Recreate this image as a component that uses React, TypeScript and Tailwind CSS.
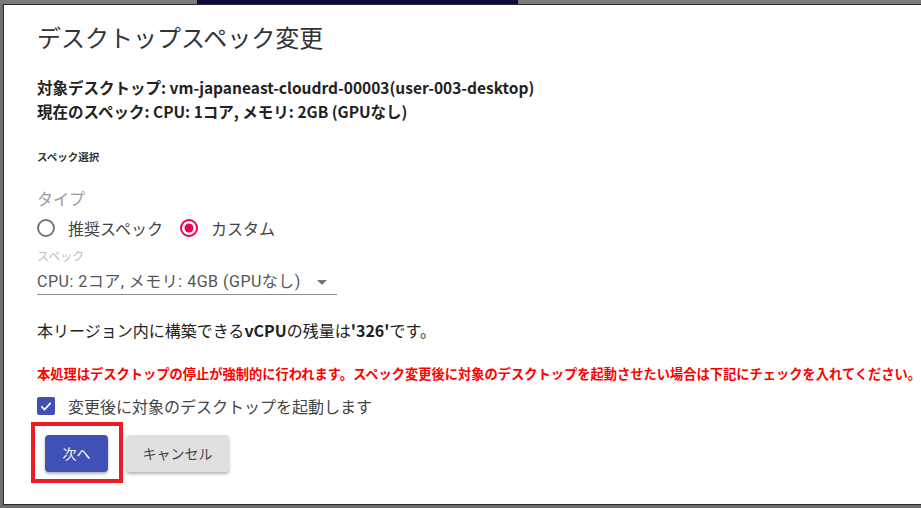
import React from "react";

const jp = { fontFamily: '"Noto Sans CJK JP", "Noto Sans", sans-serif' };
const rb = { fontFamily: 'Roboto, "Noto Sans CJK JP", sans-serif' };

export default function App() {
  return (
    <div className="w-[921px] h-[508px] bg-[#767676] overflow-hidden flex flex-col" style={jp}>
      <div className="h-[4px] flex shrink-0">
        <div className="w-[197px] bg-[#7a7a7a]" />
        <div className="w-[321px] bg-[#0b0b3e]" />
        <div className="flex-1 bg-[#7a7a7a]" />
      </div>
      <div className="flex h-[501px] shrink-0">
        <div className="w-[3px] bg-[#6f6f6f] shrink-0" />
        <div className="flex-1 bg-white border-t border-l border-b border-[#2a2a2a] pl-[33px] pt-[16px] flex flex-col">
          <div className="text-[24px] leading-[32px] text-[#333] whitespace-nowrap">デスクトップスペック変更</div>
          <div className="mt-[22px] text-[15.5px] leading-[24px] font-bold text-[#222] whitespace-nowrap">
            対象デスクトップ: vm-japaneast-cloudrd-00003(user-003-desktop)
          </div>
          <div className="text-[15.5px] leading-[24px] font-bold text-[#222] whitespace-nowrap">
            現在のスペック: CPU: 1コア, メモリ: 2GB (GPUなし)
          </div>
          <div className="mt-[27px] text-[10.5px] leading-[14px] font-bold text-[#333]">スペック選択</div>
          <div className="mt-[22px] text-[16px] leading-[24px] text-[#9a9a9a]">タイプ</div>
          <div className="mt-[6px] h-[24px] flex items-center text-[16px] text-[#444]">
            <svg width="18" height="18" viewBox="0 0 18 18" className="shrink-0">
              <circle cx="9" cy="9" r="8" fill="none" stroke="#757575" strokeWidth="2" />
            </svg>
            <span className="ml-[13px]">推奨スペック</span>
            <svg width="18" height="18" viewBox="0 0 18 18" className="ml-[17px] shrink-0">
              <circle cx="9" cy="9" r="8" fill="none" stroke="#f50057" strokeWidth="2" />
              <circle cx="9" cy="9" r="4.5" fill="#f50057" />
            </svg>
            <span className="ml-[13px]">カスタム</span>
          </div>
          <div className="mt-[8px] text-[12px] leading-[16px] text-[#bdbdbd]">スペック</div>
          <div className="mt-[6px] w-[300px] border-b border-[#8a8a8a] flex items-center h-[25px]" style={rb}>
            <span className="text-[16px] leading-[24px] tracking-[0.5px] text-[#555] whitespace-nowrap">CPU: 2コア, メモリ: 4GB (GPUなし)</span>
            <svg width="10" height="5" viewBox="0 0 10 5" className="ml-auto mr-[10px]">
              <path d="M0 0 L10 0 L5 5 Z" fill="#757575" />
            </svg>
          </div>
          <div className="mt-[25px] text-[16px] leading-[20px] text-[#222] whitespace-nowrap">
            本リージョン内に構築できる<b>vCPU</b>の残量は<b>'326'</b>です。
          </div>
          <div className="mt-[24px] text-[13.25px] leading-[20px] font-bold text-[#ff0000] whitespace-nowrap">
            本処理はデスクトップの停止が強制的に行われます。スペック変更後に対象のデスクトップを起動させたい場合は下記にチェックを入れてください。
          </div>
          <div className="mt-[10px] h-[24px] flex items-center">
            <div className="w-[18px] h-[18px] rounded-[2px] bg-[#3f51b5] flex items-center justify-center shrink-0">
              <svg width="14" height="14" viewBox="0 0 24 24">
                <path d="M4 12.5 L9.5 18 L20 6.5" fill="none" stroke="white" strokeWidth="3" />
              </svg>
            </div>
            <span className="ml-[13px] text-[16px] text-[#444] whitespace-nowrap">変更後に対象のデスクトップを起動します</span>
          </div>
          <div className="mt-[17px] flex items-start pl-[8px]">
            <div className="relative">
              <button className="w-[63px] h-[37px] rounded-[4px] bg-[#3f51b5] text-white text-[14px] shadow-[0_2px_3px_rgba(0,0,0,0.3)]">
                次へ
              </button>
              <div className="absolute left-[-14px] top-[-13px] w-[92px] h-[61px] border-[4px] border-[#ec1c24]" />
            </div>
            <button className="ml-[18px] w-[103px] h-[37px] rounded-[4px] bg-[#e0e0e0] text-[#444] text-[14px] shadow-[0_2px_3px_rgba(0,0,0,0.3)]">
              キャンセル
            </button>
          </div>
        </div>
      </div>
      <div className="flex-1 bg-[#6f6f6f]" />
    </div>
  );
}
